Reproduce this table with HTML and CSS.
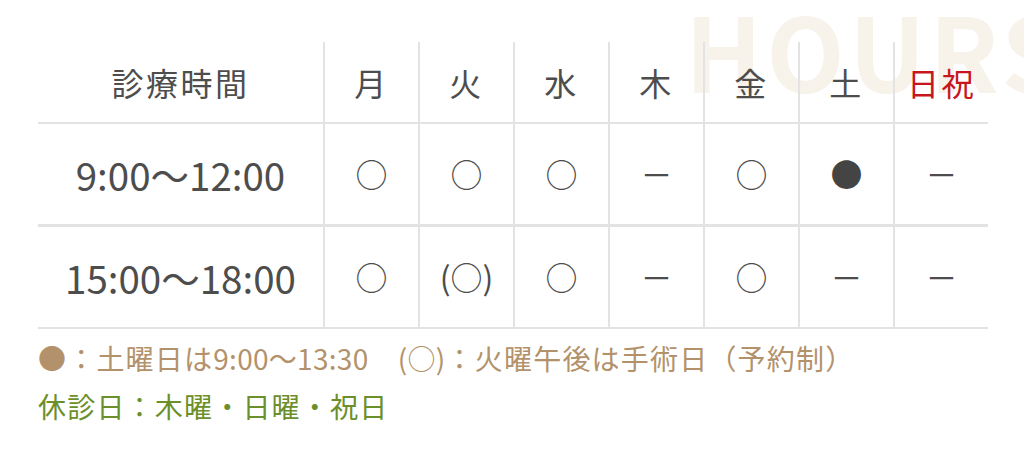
FILE: index.html
```html
<!DOCTYPE html>
<html lang="ja">
<head>
<meta charset="utf-8">
<title>診療時間</title>
<link rel="stylesheet" href="styles.css">
</head>
<body>
<section class="hours">
  <div class="watermark" aria-hidden="true">HOURS</div>
  <table class="schedule">
    <thead>
      <tr>
        <th class="label">診療時間</th>
        <th>月</th>
        <th>火</th>
        <th>水</th>
        <th>木</th>
        <th>金</th>
        <th>土</th>
        <th class="holiday">日祝</th>
      </tr>
    </thead>
    <tbody>
      <tr class="first">
        <td class="label time">9:00〜12:00</td>
        <td><span class="open">○</span></td>
        <td><span class="open">○</span></td>
        <td><span class="open">○</span></td>
        <td><span class="closed">－</span></td>
        <td><span class="open">○</span></td>
        <td><span class="special">●</span></td>
        <td><span class="closed">－</span></td>
      </tr>
      <tr>
        <td class="label time">15:00〜18:00</td>
        <td><span class="open">○</span></td>
        <td><span class="open paren">(○)</span></td>
        <td><span class="open">○</span></td>
        <td><span class="closed">－</span></td>
        <td><span class="open">○</span></td>
        <td><span class="closed">－</span></td>
        <td><span class="closed">－</span></td>
      </tr>
    </tbody>
  </table>
  <p class="note note-tan">●：土曜日は<span class="num">9:00〜13:30</span>　<span class="num">(○)</span>：火曜午後は手術日（予約制）</p>
  <p class="note note-green">休診日：木曜・日曜・祝日</p>
</section>
</body>
</html>
```

FILE: styles.css
```css
html, body {
  margin: 0;
  padding: 0;
  background: #ffffff;
}

body {
  font-family: "Noto Sans CJK JP", "Noto Sans", sans-serif;
  color: #4d4d4d;
}

.hours {
  position: relative;
  width: 1024px;
  height: 468px;
  box-sizing: border-box;
  padding: 42px 36px 0 38px;
  overflow: hidden;
}

.watermark {
  position: absolute;
  top: -22px;
  left: 685px;
  font-size: 102px;
  font-weight: 700;
  line-height: 1.4;
  letter-spacing: 0.04em;
  color: #f7f2ea;
  white-space: nowrap;
  z-index: 0;
}

.schedule {
  position: relative;
  z-index: 1;
  width: 950px;
  border-collapse: collapse;
  table-layout: fixed;
}

.schedule th,
.schedule td {
  width: 93px;
  padding: 0;
  text-align: center;
  vertical-align: middle;
  border-left: 2px solid #e3e3e3;
  border-bottom: 2px solid #e3e3e3;
}

.schedule .label {
  width: 285px;
  border-left: none;
}

.schedule th {
  height: 80px;
  font-size: 32px;
  font-weight: 400;
  letter-spacing: 0.08em;
  color: #4d4d4d;
}

.schedule th.holiday {
  color: #c8161d;
}

.schedule td {
  height: 100px;
}

.schedule tr.first td {
  border-bottom-width: 3px;
}

.time {
  font-size: 38.5px;
  letter-spacing: 0;
  color: #4d4d4d;
}

.open,
.closed,
.special {
  font-size: 32px;
  line-height: 1;
  color: #4d4d4d;
}

.special {
  color: #444444;
}

.note {
  margin: 0;
  font-size: 28px;
  line-height: 48px;
  letter-spacing: 1.2px;
}

.note .num {
  letter-spacing: 0.3px;
}

.note-tan {
  margin-top: 5px;
  color: #b3926b;
}

.note-green {
  color: #6b8f2b;
}
```
